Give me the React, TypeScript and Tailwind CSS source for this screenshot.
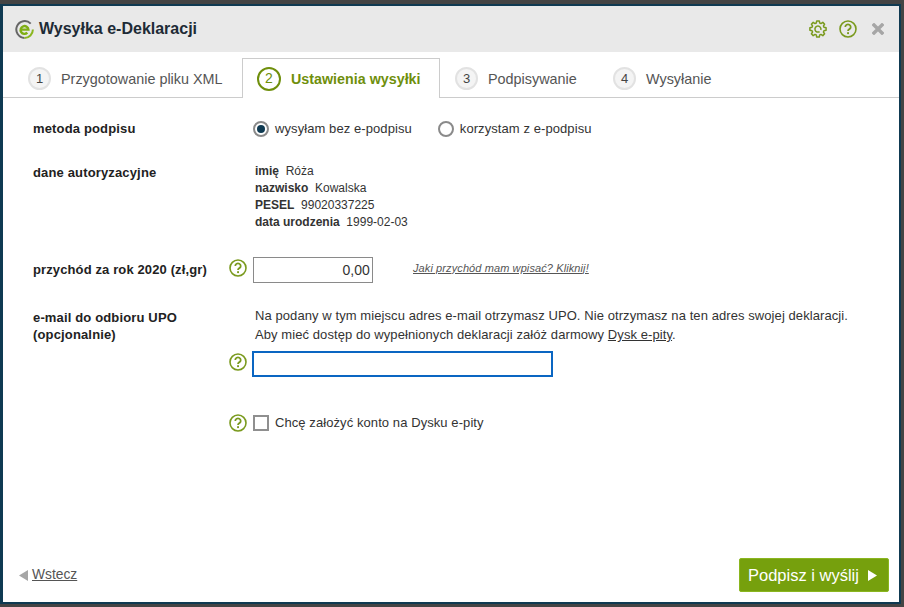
import React from "react";

const Help = ({ size = 18, className = "" }: { size?: number; className?: string }) => (
  <svg width={size} height={size} viewBox="0 0 18 18" className={`shrink-0 ${className}`}>
    <circle cx="9" cy="9" r="8" fill="none" stroke="#7a9a1e" strokeWidth="1.6" />
    <path d="M6.3 7a2.7 2.5 0 1 1 4.1 2.1c-.9.6-1.4 1-1.4 2" fill="none" stroke="#7a9a1e" strokeWidth="1.8" />
    <rect x="8.1" y="12.2" width="1.9" height="1.9" fill="#7a9a1e" />
  </svg>
);

const Gear = () => {
  const teeth = 8;
  const pts: string[] = [];
  for (let i = 0; i < teeth; i++) {
    const a = (i / teeth) * Math.PI * 2 - Math.PI / 2;
    const s = (Math.PI * 2) / teeth;
    const p = (r: number, t: number) => `${(9 + r * Math.cos(t)).toFixed(2)} ${(9 + r * Math.sin(t)).toFixed(2)}`;
    pts.push(`${i === 0 ? "M" : "L"}${p(6.2, a - s * 0.36)}`, `L${p(8.2, a - s * 0.2)}`, `L${p(8.2, a + s * 0.2)}`, `L${p(6.2, a + s * 0.36)}`);
  }
  return (
    <svg width="18" height="18" viewBox="0 0 18 18" fill="none" stroke="#7a9a1e" strokeWidth="1.5" strokeLinejoin="round">
      <path d={pts.join(" ") + "Z"} />
      <path d="M11.8 10a3 3 0 1 0-1.2 1.6" />
    </svg>
  );
};

const Num = ({ n }: { n: number }) => (
  <span className="w-[23px] h-[23px] rounded-full bg-[#f4f4f4] border-2 border-[#e2e2e2] flex items-center justify-center text-[13px] text-[#444]">
    {n}
  </span>
);

const Tab = ({ n, label, cls }: { n: number; label: string; cls: string }) => (
  <div className={`flex items-center gap-[10px] text-[#555] text-[14.4px] h-[39px] ${cls}`}>
    <Num n={n} />
    <span className="pt-[2px]">{label}</span>
  </div>
);

export default function App() {
  return (
    <div className="w-[904px] h-[607px] bg-[#444444] pt-[4px] pr-[3px] pb-[3px] overflow-hidden" style={{ fontFamily: '"Liberation Sans", Arial, sans-serif' }}>
      <div className="h-full border-[2px] border-l-[3px] border-[#0f3a52] bg-white flex flex-col">
        <header className="h-[46px] bg-[#e9e9e9] flex items-center pl-[12px] pr-[14px] shrink-0">
          <svg width="19" height="19" viewBox="0 0 19 19">
            <path d="M15.7 3.6A8.4 8.4 0 1 0 9.5 17.9" fill="none" stroke="#666666" strokeWidth="2" />
            <path d="M17.9 9.5a8.4 8.4 0 0 1-8.4 8.4" fill="none" stroke="#8ab61f" strokeWidth="2" />
            <path d="M6 9.6h7.4a3.9 3.9 0 1 0-1.1 3.1" fill="none" stroke="#7fae14" strokeWidth="2.4" />
          </svg>
          <h1 className="ml-[5px] text-[16px] font-bold text-[#1d2b36]">Wysyłka e-Deklaracji</h1>
          <div className="ml-auto flex items-center gap-[12px]">
            <Gear />
            <Help />
            <svg width="12" height="12" viewBox="0 0 12 12" className="ml-[3px] mr-[1px]">
              <path d="M2 2l8 8M10 2l-8 8" stroke="#a6a6a6" strokeWidth="3.4" strokeLinecap="square" />
            </svg>
          </div>
        </header>

        <nav className="h-[46px] shrink-0 border-b border-[#cccccc] flex items-end pl-[25px]">
          <Tab n={1} label="Przygotowanie pliku XML" cls="w-[214px] mb-[-1px]" />
          <div className="w-[198px] h-[40px] mb-[-1px] bg-white border border-b-0 border-[#cccccc] flex items-center pl-[14px] gap-[10px] text-[14.3px] font-bold text-[#6f8f0c]">
            <span className="w-[24px] h-[24px] rounded-full border-[2.5px] border-[#6f8f0c] flex items-center justify-center text-[14px] font-normal">2</span>
            <span className="pt-[2px]">Ustawienia wysyłki</span>
          </div>
          <Tab n={3} label="Podpisywanie" cls="w-[158px] ml-[15px] mb-[-1px]" />
          <Tab n={4} label="Wysyłanie" cls="mb-[-1px]" />
        </nav>

        <main className="flex-1 pl-[30px] text-[13px] tracking-[0.08px] text-[#333]">
          <div className="flex items-center mt-[21px] h-[20px]">
            <div className="w-[220px] font-bold text-[#222] tracking-[0.15px]">metoda podpisu</div>
            <span className="w-[16px] h-[16px] rounded-full border-2 border-[#8a8a8a] flex items-center justify-center"><span className="w-[8px] h-[8px] rounded-full bg-[#0f3a52]" /></span>
            <span className="ml-[6px]">wysyłam bez e-podpisu</span>
            <span className="ml-[26px] w-[16px] h-[16px] rounded-full border-2 border-[#8a8a8a]" />
            <span className="ml-[6px]">korzystam z e-podpisu</span>
          </div>

          <div className="flex mt-[24px]">
            <div className="w-[222px] font-bold text-[#222] tracking-[0.15px]">dane autoryzacyjne</div>
            <div className="leading-[17px] text-[12px] tracking-normal">
              <div><b>imię</b>&nbsp; Róża</div>
              <div><b>nazwisko</b>&nbsp; Kowalska</div>
              <div><b>PESEL</b>&nbsp; 99020337225</div>
              <div><b>data urodzenia</b>&nbsp; 1999-02-03</div>
            </div>
          </div>

          <div className="flex items-center mt-[26px] h-[26px]">
            <div className="w-[196px] font-bold text-[#222] tracking-[0.12px]">przychód za rok 2020 (zł,gr)</div>
            <Help className="mb-[4px]" />
            <input readOnly value="0,00" className="ml-[6px] w-[120px] h-[26px] border border-[#8a8a8a] text-right pr-[2px] text-[14px] text-[#333] outline-none" />
            <a className="ml-[40px] text-[11px] tracking-[0.1px] italic underline text-[#555] mb-[4px]">Jaki przychód mam wpisać? Kliknij!</a>
          </div>

          <div className="flex mt-[23px]">
            <div className="w-[222px] font-bold text-[#222] tracking-[0.15px] leading-[17px] pt-[3px]">e-mail do odbioru UPO<br />(opcjonalnie)</div>
            <div className="leading-[19px]">
              <p>Na podany w tym miejscu adres e-mail otrzymasz UPO. Nie otrzymasz na ten adres swojej deklaracji.</p>
              <p>Aby mieć dostęp do wypełnionych deklaracji załóż darmowy <a className="underline">Dysk e-pity</a>.</p>
            </div>
          </div>

          <div className="flex items-center h-[26px] mt-[7px] ml-[196px]">
            <Help className="mb-[5px]" />
            <input className="ml-[5px] w-[301px] h-[26px] border-2 border-[#0a66c2] outline-none" />
          </div>

          <div className="flex items-center h-[18px] mt-[37px] ml-[196px]">
            <Help />
            <span className="ml-[6px] w-[16px] h-[16px] border-2 border-[#8f8f8f]" />
            <span className="ml-[6px]">Chcę założyć konto na Dysku e-pity</span>
          </div>
        </main>

        <footer className="h-[44px] shrink-0 flex items-center justify-between pl-[16px] pr-[10px] pb-[10px]">
          <div className="flex items-center gap-[4px] text-[13.8px] text-[#555]">
            <svg width="9" height="11" viewBox="0 0 9 11"><path d="M9 0v11L0 5.5z" fill="#a6a6a6" /></svg>
            <a className="underline">Wstecz</a>
          </div>
          <button className="w-[150px] h-[34px] bg-[#76a00d] border border-[#8ab61f] rounded-[2px] text-white text-[16.5px] flex items-center pl-[8px]">
            Podpisz i wyślij
            <svg width="9" height="11" viewBox="0 0 9 11" className="ml-[9px]"><path d="M0 0v11l9-5.5z" fill="#fff" /></svg>
          </button>
        </footer>
      </div>
    </div>
  );
}
